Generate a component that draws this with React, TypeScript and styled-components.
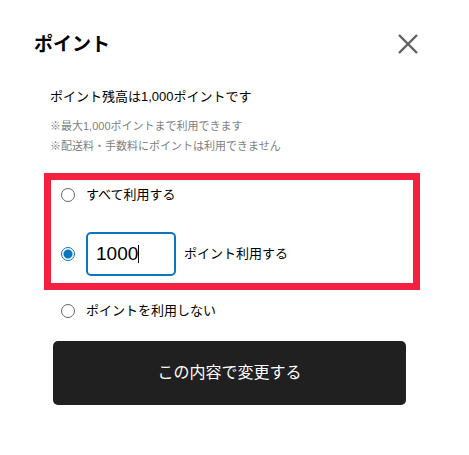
import React, { useState } from "react";
import styled, { createGlobalStyle } from "styled-components";

const GlobalStyle = createGlobalStyle`
  *, *::before, *::after { box-sizing: border-box; }
  body {
    margin: 0;
    background: #fff;
    color: #000;
    font-family: "Liberation Sans", "Noto Sans CJK JP", sans-serif;
    font-size: 13px;
    line-height: 20px;
  }
  button, input { font: inherit; }
`;

const Dialog = styled.form`
  padding: 30px 49px 50px 44px;
`;

const Header = styled.header`
  display: flex;
  align-items: center;
  justify-content: space-between;
  height: 30px;
  margin: 0 0 27px -10px;
`;

const Title = styled.h1`
  margin: 0;
  font-size: 19px;
  font-weight: 700;
  line-height: 30px;
`;

const CloseButton = styled.button`
  display: flex;
  padding: 0;
  border: 0;
  background: none;
  cursor: pointer;
`;

const Summary = styled.section`
  padding-left: 6px;
  margin-bottom: 17px;
`;

const Balance = styled.p`
  margin: 0 0 9px;
`;

const Note = styled.p`
  margin: 0;
  color: #808080;
  font-size: 11px;
  line-height: 20px;
`;

const Options = styled.fieldset`
  display: flex;
  flex-direction: column;
  gap: 6px;
  min-width: 0;
  margin: 0 0 15px;
  padding: 0;
  border: 0;
`;

const Highlight = styled.div`
  display: flex;
  flex-direction: column;
  gap: 22px;
  padding-bottom: 7px;
  border: 7px solid #f5203f;
`;

const OptionRow = styled.div<{ $inset?: boolean }>`
  display: flex;
  align-items: center;
  min-height: 30px;
  padding-left: ${(p) => (p.$inset ? 17 : 10)}px;
`;

const Radio = styled.input`
  appearance: none;
  flex: none;
  width: 14px;
  height: 14px;
  margin: 0 11px 0 0;
  border: 1px solid #666;
  border-radius: 50%;
  background: #fff;

  &:checked {
    border-color: #0b76c0;
    background: radial-gradient(circle, #0b76c0 4px, #fff 5px);
  }
`;

const AmountField = styled.span`
  display: flex;
  align-items: center;
  width: 90px;
  height: 44px;
  margin-right: 8px;
  padding-left: 8px;
  border: 2px solid #0b76c0;
  border-radius: 5px;
`;

const AmountInput = styled.input`
  field-sizing: content;
  min-width: 0;
  max-width: 74px;
  padding: 0;
  border: 0;
  border-right: 1px solid #000;
  outline: 0;
  background: none;
  color: #000;
  caret-color: transparent;
  font-size: 19px;
  line-height: 18px;
  height: 18px;
`;

const SubmitButton = styled.button`
  display: block;
  width: calc(100% - 23px);
  height: 64px;
  margin-left: 9px;
  border: 0;
  border-radius: 5px;
  background: #202020;
  color: #fff;
  font-size: 16px;
  cursor: pointer;
`;

export default function App() {
  const [choice, setChoice] = useState("some");
  const [amount, setAmount] = useState("1000");

  const radio = (value: string) => (
    <Radio
      type="radio"
      name="points"
      id={`points-${value}`}
      value={value}
      checked={choice === value}
      onChange={() => setChoice(value)}
    />
  );

  return (
    <>
      <GlobalStyle />
      <Dialog onSubmit={(e) => e.preventDefault()}>
        <Header>
          <Title>ポイント</Title>
          <CloseButton type="button" aria-label="閉じる">
            <svg width="24" height="24" viewBox="0 0 24 24" fill="none" stroke="#606060" strokeWidth="2.4">
              <path d="M3 2 21 20M21 2 3 20" />
            </svg>
          </CloseButton>
        </Header>
        <Summary>
          <Balance>ポイント残高は1,000ポイントです</Balance>
          <Note>※最大1,000ポイントまで利用できます</Note>
          <Note>※配送料・手数料にポイントは利用できません</Note>
        </Summary>
        <Options aria-label="ポイント">
          <Highlight>
            <OptionRow>
              {radio("all")}
              <label htmlFor="points-all">すべて利用する</label>
            </OptionRow>
            <OptionRow>
              {radio("some")}
              <AmountField>
                <AmountInput
                  type="text"
                  inputMode="numeric"
                  aria-labelledby="amount-label"
                  value={amount}
                  onChange={(e) => setAmount(e.target.value)}
                />
              </AmountField>
              <label id="amount-label" htmlFor="points-some">ポイント利用する</label>
            </OptionRow>
          </Highlight>
          <OptionRow $inset>
            {radio("none")}
            <label htmlFor="points-none">ポイントを利用しない</label>
          </OptionRow>
        </Options>
        <SubmitButton type="submit">この内容で変更する</SubmitButton>
      </Dialog>
    </>
  );
}
